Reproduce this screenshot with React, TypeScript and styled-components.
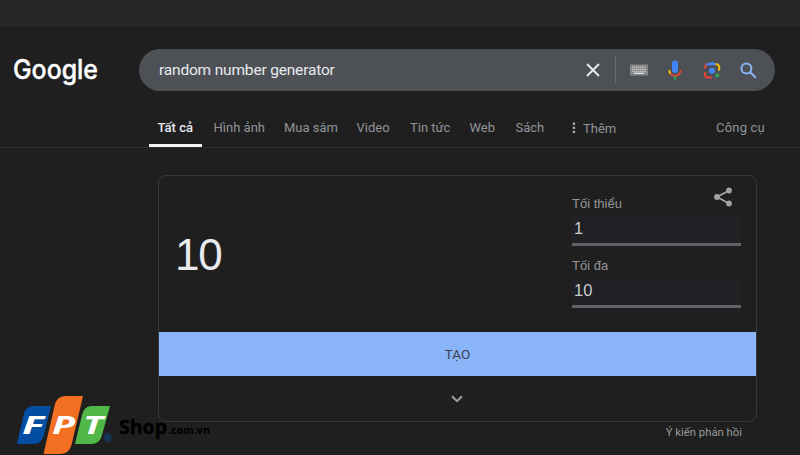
import { useState } from "react"
import styled, { createGlobalStyle } from "styled-components"

const GlobalStyle = createGlobalStyle`
  * {
    box-sizing: border-box;
  }

  body {
    margin: 0;
    background-color: #1f1f1f;
    font-family: Roboto, "Liberation Sans", sans-serif;
    overflow: hidden;
  }
`

const Page = styled.div`
  position: relative;
  width: 800px;
  height: 455px;
  overflow: hidden;
`

const TopStrip = styled.div`
  height: 26px;
  background-color: #252628;
  border-bottom: 1px solid #2c2d2f;
`

const Header = styled.header`
  display: flex;
  align-items: center;
  height: 42px;
  margin-top: 23px;
  padding-left: 14px;
`

const Logo = styled.svg`
  width: 86px;
  height: 42px;
  margin-right: 39px;
  overflow: visible;
`

const SearchBar = styled.div`
  display: flex;
  align-items: center;
  width: 636px;
  height: 42px;
  padding: 0 18px 0 20px;
  border-radius: 21px;
  background-color: #4d5156;
`

const SearchInput = styled.input`
  flex: 1;
  min-width: 0;
  padding: 0;
  border: none;
  outline: none;
  background: transparent;
  color: #e8eaed;
  font-family: Roboto, sans-serif;
  font-size: 15.5px;
  letter-spacing: -0.18px;
`

const SearchIcons = styled.div`
  display: flex;
  align-items: center;
  height: 42px;

  svg {
    display: block;
  }
`

const Divider = styled.div`
  width: 1px;
  height: 26px;
  margin: 0 14px 0 15px;
  background-color: #6a6e73;
`

const Gap = styled.div<{ $size: number }>`
  width: ${({ $size }) => $size}px;
`

const Nav = styled.nav`
  display: flex;
  height: 57px;
  padding: 18px 0 0 149px;
  border-bottom: 1px solid #303134;
`

const Tab = styled.div<{ $width: number; $active?: boolean }>`
  width: ${({ $width }) => $width}px;
  height: 38px;
  margin-right: 3px;
  padding-left: 8.5px;
  color: ${({ $active }) => ($active ? "#e8eaed" : "#909499")};
  border-bottom: ${({ $active }) => ($active ? "3px solid #f1f3f4" : "none")};
  font-size: 13px;
  font-weight: ${({ $active }) => ($active ? 500 : 400)};
  line-height: 38px;
  white-space: nowrap;
`

const More = styled.div`
  display: flex;
  align-items: center;
  gap: 7px;
  width: 144px;
  height: 38px;
  margin-left: 15px;
  color: #909499;
  font-size: 13px;
`

const Tools = styled.div`
  color: #909499;
  font-size: 13px;
  line-height: 38px;
  letter-spacing: 0.2px;
`

const Result = styled.main`
  width: 599px;
  margin: 27px 0 0 158px;
`

const Card = styled.section`
  height: 247px;
  border: 1px solid #36383a;
  border-radius: 8px;
`

const CardBody = styled.div`
  display: flex;
  justify-content: space-between;
  height: 156px;
  padding: 19px 15px 0 16px;
`

const Value = styled.div`
  padding-top: 34px;
  color: #e8eaed;
  font-family: "Liberation Sans", Arial, sans-serif;
  font-size: 44px;
  line-height: 52px;
  letter-spacing: -1.2px;
`

const Fields = styled.div`
  position: relative;
  width: 169px;
`

const ShareIcon = styled.svg`
  position: absolute;
  top: -8px;
  right: 8px;
`

const Field = styled.label`
  display: flex;
  flex-direction: column;
  height: 62px;
  color: #969696;
  font-family: "Liberation Sans", Arial, sans-serif;
  font-size: 13px;
  line-height: 17px;
`

const FieldInput = styled.input`
  width: 169px;
  height: 32px;
  margin-top: 2px;
  padding: 0 0 0 2px;
  border: none;
  border-bottom: 3px solid #5f6368;
  outline: none;
  background-color: #202124;
  color: #c8cacd;
  font-family: "Liberation Sans", Arial, sans-serif;
  font-size: 16.5px;
`

const Generate = styled.button`
  display: block;
  width: 100%;
  height: 44px;
  padding: 0;
  border: none;
  background-color: #8ab4f8;
  color: #3a4150;
  font-family: Roboto, sans-serif;
  font-size: 13.5px;
`

const Expand = styled.div`
  display: flex;
  justify-content: center;
  align-items: center;
  height: 45px;
  padding-right: 2px;
`

const Feedback = styled.div`
  padding: 3px 15px 0 0;
  color: #9a9a9a;
  font-size: 11.3px;
  line-height: 15px;
  text-align: right;
`

// sits over the lower left corner of the card
const Watermark = styled.svg`
  position: absolute;
  left: 10px;
  bottom: 0;
`

const tabs = [
  { label: "Tất cả", width: 53 },
  { label: "Hình ảnh", width: 67.5 },
  { label: "Mua sắm", width: 69.5 },
  { label: "Video", width: 50.5 },
  { label: "Tin tức", width: 56.5 },
  { label: "Web", width: 43 },
  { label: "Sách", width: 47 },
]

const GoogleLogo = () => (
  <Logo viewBox="0 0 86 42">
    <text
      x="-1"
      y="29.500"
      fill="#fff"
      stroke="#fff"
      strokeWidth="0.4"
      fontFamily="Inter, sans-serif"
      fontSize="26.500"
      fontWeight="500"
      textLength="85"
      lengthAdjust="spacingAndGlyphs"
    >
      Google
    </text>
  </Logo>
)

const ClearIcon = () => (
  <svg width="14" height="14" viewBox="0 0 14 14" stroke="#e8eaed" strokeWidth="1.9">
    <path d="M1 1l12 12M13 1L1 13" />
  </svg>
)

const KeyboardIcon = () => (
  <svg width="18" height="12" viewBox="0 0 18 12">
    <rect y="0.5" width="18" height="11" fill="#858789" />
    <path
      d="M2 3.2h14M2 5.4h14M2 7.4h14"
      stroke="#c2c3c4"
      strokeWidth="1.3"
      strokeDasharray="1.4 0.5"
    />
    <path d="M4 9.3h10" stroke="#dadada" strokeWidth="1.4" />
  </svg>
)

const MicIcon = () => (
  <svg width="14" height="20" viewBox="0 0 14 20" fill="none">
    <rect x="4" y="0.5" width="6" height="12.5" rx="3" fill="#4285f4" />
    <path d="M1.2 10c0 1.7.6 3 1.6 4" stroke="#fbbc04" strokeWidth="1.8" />
    <path d="M2.6 13.8C5 16.6 9 16.6 11.4 13.8c.9-1 1.4-2.3 1.4-3.8" stroke="#ea4335" strokeWidth="1.8" />
    <path d="M7 16v3.4" stroke="#34a853" strokeWidth="1.9" />
  </svg>
)

const LensIcon = () => (
  <svg width="18" height="18" viewBox="0 0 18 18" fill="none" strokeWidth="2">
    <path d="M2 7.5V6a2.7 2.7 0 0 1 2.7-2.7H6" stroke="#ea4335" />
    <path d="M3.3 4.1l1.5-.8h8.7" stroke="#4285f4" />
    <path d="M5.3 4l1.5-2.8h4.6L12.9 4z" fill="#4285f4" />
    <path d="M12.5 3.3h1A2.7 2.7 0 0 1 16.2 6v3.7" stroke="#fbbc04" />
    <path d="M2 11.2v2.5a2.7 2.7 0 0 0 2.7 2.7h4" stroke="#ea4335" />
    <circle cx="9" cy="9.7" r="3" fill="#4285f4" />
    <circle cx="14.3" cy="14.4" r="2" fill="#34a853" />
  </svg>
)

const MagnifierIcon = () => (
  <svg width="17" height="17" viewBox="0 0 17 17" fill="none" stroke="#8ab4f8" strokeWidth="2">
    <circle cx="6.4" cy="6.4" r="5" />
    <path d="M10.2 10.2l5.6 5.6" />
  </svg>
)

const FptLogo = () => (
  <Watermark width="206" height="60" viewBox="0 0 206 60">
    <path d="M19 11h22l-7 29q-2 9-11 9H7l6.500-29q2-9 10-9z" fill="#034ea2" />
    <path d="M53 1h20l-11.500 49q-2.500 9-11.500 9H33.500l11-48q2-10 11-10z" fill="#f36f21" />
    <path d="M82 11h18l-8 29q-2 9-11 9H65l7-29q2-9 10-9z" fill="#51b848" />
    <g
      fill="#fff"
      fontFamily="'Open Sans', sans-serif"
      fontSize="25"
      fontWeight="bold"
      fontStyle="italic"
    >
      <text x="12" y="39" textLength="22" lengthAdjust="spacingAndGlyphs">F</text>
      <text x="42" y="39" textLength="23" lengthAdjust="spacingAndGlyphs">P</text>
      <text x="73" y="39" textLength="20" lengthAdjust="spacingAndGlyphs">T</text>
    </g>
    <text x="94" y="47" fill="#0757a8" fontFamily="Roboto, sans-serif" fontSize="10">®</text>
    <g fill="#000" stroke="#000" fontFamily="'Open Sans', sans-serif" fontWeight="bold">
      <text x="109" y="39" fontSize="19.500" strokeWidth="0.4" textLength="48" lengthAdjust="spacingAndGlyphs">Shop</text>
      <text x="158" y="39" fontSize="10.5" strokeWidth="0" textLength="42" lengthAdjust="spacingAndGlyphs">.com.vn</text>
    </g>
  </Watermark>
)

export const App = () => {
  const [query, setQuery] = useState("random number generator")
  const [range, setRange] = useState({ min: "1", max: "10" })
  const [value, setValue] = useState(10)

  const onGenerate = () => {
    const min = Number(range.min)
    const max = Number(range.max)
    setValue(Math.floor(Math.random() * (max - min + 1)) + min)
  }

  return (
    <Page>
      <GlobalStyle />
      <TopStrip />
      <Header>
        <GoogleLogo />
        <SearchBar>
          <SearchInput value={query} onChange={(e) => setQuery(e.target.value)} />
          <SearchIcons>
            <ClearIcon />
            <Divider />
            <KeyboardIcon />
            <Gap $size={20} />
            <MicIcon />
            <Gap $size={21} />
            <LensIcon />
            <Gap $size={19} />
            <MagnifierIcon />
          </SearchIcons>
        </SearchBar>
      </Header>
      <Nav>
        {tabs.map((tab, index) => (
          <Tab key={tab.label} $width={tab.width} $active={index === 0}>
            {tab.label}
          </Tab>
        ))}
        <More>
          <svg width="4" height="12" viewBox="0 0 4 12" fill="#a2a6aa">
            <rect x="0.7" y="0.5" width="2.400" height="2.400" />
            <rect x="0.7" y="4.600" width="2.400" height="2.400" />
            <rect x="0.7" y="8.700" width="2.400" height="2.400" />
          </svg>
          Thêm
        </More>
        <Tools>Công cụ</Tools>
      </Nav>
      <Result>
        <Card>
          <CardBody>
            <Value>{value}</Value>
            <Fields>
              <ShareIcon width="20" height="20" viewBox="0 0 20 20" fill="#a2a2a2">
                <path d="M16 3.500L4 10l12 6.500" fill="none" stroke="#a2a2a2" strokeWidth="1.800" />
                <circle cx="4" cy="10" r="2.900" />
                <circle cx="16" cy="3.500" r="2.900" />
                <circle cx="16" cy="16.500" r="2.900" />
              </ShareIcon>
              <Field>
                Tối thiểu
                <FieldInput
                  value={range.min}
                  onChange={(e) => setRange((pre) => ({ ...pre, min: e.target.value }))}
                />
              </Field>
              <Field>
                Tối đa
                <FieldInput
                  value={range.max}
                  onChange={(e) => setRange((pre) => ({ ...pre, max: e.target.value }))}
                />
              </Field>
            </Fields>
          </CardBody>
          <Generate onClick={onGenerate}>TẠO</Generate>
          <Expand>
            <svg width="12" height="8" viewBox="0 0 12 8" fill="none" stroke="#a0a0a0" strokeWidth="2">
              <path d="M1 1.200l5 5 5-5" />
            </svg>
          </Expand>
        </Card>
        <Feedback>Ý kiến phản hồi</Feedback>
      </Result>
      <FptLogo />
    </Page>
  )
}

export default App
